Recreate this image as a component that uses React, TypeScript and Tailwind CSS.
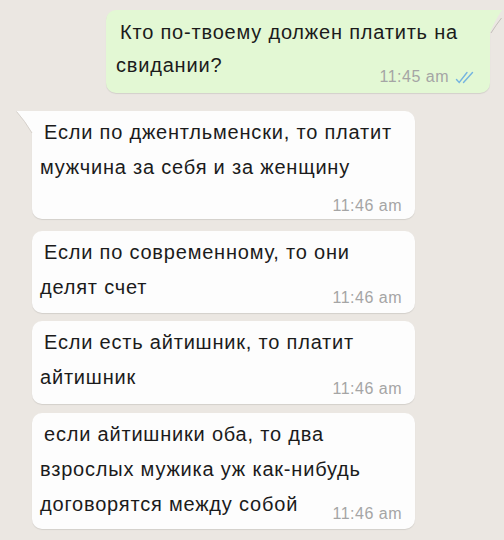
import React from "react";

type Msg = {
  lines: string[];
  time: string;
  timeBelow?: boolean;
  tail?: boolean;
  className: string;
};

const incoming: Msg[] = [
  {
    lines: ["Если по джентльменски, то платит", "мужчина за себя и за женщину"],
    time: "11:46 am",
    timeBelow: true,
    tail: true,
    className: "mt-[18px] h-[108px]",
  },
  {
    lines: ["Если по современному, то они", "делят счет"],
    time: "11:46 am",
    className: "mt-[12px] h-[82px]",
  },
  {
    lines: ["Если есть айтишник, то платит", "айтишник"],
    time: "11:46 am",
    className: "mt-[8px] h-[83px]",
  },
  {
    lines: ["если айтишники оба, то два", "взрослых мужика уж как-нибудь", "договорятся между собой"],
    time: "11:46 am",
    className: "mt-[9px] h-[116px]",
  },
];

function DoubleCheck() {
  return (
    <svg width="22" height="13" viewBox="0 0 22 13" fill="none" stroke="#74b4e0" strokeWidth="1.4" strokeLinecap="round">
      <path d="M1.5 8.5 L4.2 11.5 L12 1.5" />
      <path d="M8.5 11.5 L17.5 1.5" />
    </svg>
  );
}

function Lines({ lines, leading }: { lines: string[]; leading: string }) {
  return (
    <div className={`text-[20px] tracking-[0.8px] text-[#1b1b1b] ${leading}`}>
      {lines.map((l, i) => (
        <div key={i} className={`whitespace-nowrap ${i === 0 ? "pl-[4px]" : ""}`}>
          {l}
        </div>
      ))}
    </div>
  );
}

function Incoming({ m }: { m: Msg }) {
  return (
    <div
      className={`relative ml-[32px] w-[383px] bg-[#fdfdfd] pl-[8px] pr-[13px] pt-[4px] shadow-[0_1px_1px_rgba(0,0,0,0.1)] ${
        m.tail ? "rounded-[10px] rounded-tl-none" : "rounded-[10px]"
      } ${m.className}`}
    >
      {m.tail && (
        <svg className="absolute left-[-16px] top-0" width="17" height="24" viewBox="0 0 17 24">
          <path d="M17 0 L0.5 0 Q9 10 17 23 Z" fill="#fdfdfd" />
          <path d="M0.5 0.5 Q9 10 16 22" fill="none" stroke="#cfcac4" strokeWidth="0.8" />
        </svg>
      )}
      <Lines lines={m.lines} leading="leading-[35px]" />
      <span
        className={`absolute right-[13px] text-[16px] leading-[20px] tracking-[0.5px] text-[#a5a5a5] ${
          m.timeBelow ? "bottom-[3px]" : "bottom-[5px]"
        }`}
      >
        {m.time}
      </span>
    </div>
  );
}

export default function App() {
  return (
    <div
      className="h-[540px] w-[504px] overflow-hidden bg-[#ebe7e2]"
      style={{ fontFamily: '"Liberation Sans", Arial, sans-serif' }}
    >
      <div className="pt-[10px]">
        {/* outgoing */}
        <div className="relative ml-[106px] h-[83px] w-[384px] rounded-[10px] rounded-tr-none bg-[#e3f8d4] pl-[9px] pt-[6px] shadow-[0_1px_1px_rgba(0,0,0,0.1)]">
          <svg className="absolute right-[-13px] top-0" width="14" height="26" viewBox="0 0 14 26">
            <path d="M0 0 L13 0 Q6 10 0 25 Z" fill="#e3f8d4" />
            <path d="M12.5 8 Q7 15 2 23" fill="none" stroke="#b9b5b0" strokeWidth="0.8" />
          </svg>
          <div className="pl-[1px]">
            <Lines lines={["Кто по-твоему должен платить на", "свидании?"]} leading="leading-[33px]" />
          </div>
          <div className="absolute bottom-[6px] right-[13px] flex items-center gap-[6px]">
            <span className="text-[16px] leading-[20px] tracking-[0.5px] text-[#a5a5a5]">11:45 am</span>
            <DoubleCheck />
          </div>
        </div>

        {incoming.map((m, i) => (
          <Incoming key={i} m={m} />
        ))}
      </div>
    </div>
  );
}
